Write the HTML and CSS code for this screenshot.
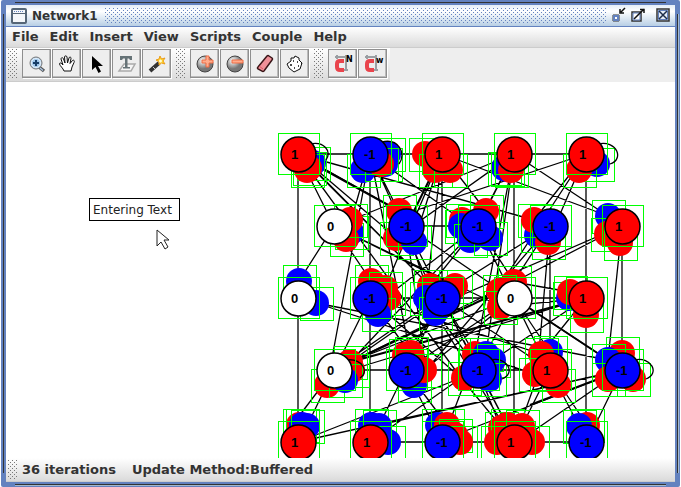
FILE: index.html
```html
<!DOCTYPE html>
<html lang="en">
<head>
<meta charset="utf-8">
<title>Network1</title>
<link rel="stylesheet" href="styles.css">
</head>
<body>
<div class="frame">
  <div class="inner">
    <header class="titlebar">
      <svg class="winicon" width="16" height="16" viewBox="0 0 16 16"><rect x="1" y="1" width="14" height="14" rx="1" fill="#f4f7fa" stroke="#556677" stroke-width="2"/><path d="M2 5.500H14" stroke="#556677"/><path d="M3 3.500H13" stroke="#6382bf" stroke-dasharray="1 1"/></svg>
      <h1>Network1</h1>
      <div class="bumps blue"></div>
      <div class="controls">
        <button type="button" aria-label="Minimize"><svg width="16" height="16" viewBox="0 0 16 16"><path d="M2 8h6v6H2z" fill="#fff" stroke="#333"/><path d="M3 9h4v4H3z" fill="#fff" stroke="#6382bf" stroke-width="2"/><path d="M14 1L10 5M9 2V6H13" fill="none" stroke="#111" stroke-width="1.500"/></svg></button>
        <button type="button" aria-label="Maximize"><svg width="16" height="16" viewBox="0 0 16 16"><path d="M1 5h9v9H1z" fill="#fff" stroke="#333" stroke-width="1.500"/><path d="M2 6h7v7H2z" fill="none" stroke="#6382bf"/><path d="M3 12L13 2M9 2.500H13V6" fill="none" stroke="#111" stroke-width="1.500"/></svg></button>
        <button type="button" class="close" aria-label="Close"><svg width="16" height="16" viewBox="0 0 16 16"><path d="M2 2h12v12H2z" fill="#e6eef8" stroke="#333" stroke-width="1.500"/><path d="M3.500 3.500h9v9h-9z" fill="none" stroke="#6382bf"/><path d="M4 4L12 12M12 4L4 12" stroke="#1c2c48" stroke-width="1.500"/></svg></button>
      </div>
    </header>
    <nav class="menubar">
      <button type="button">File</button><button type="button">Edit</button><button type="button">Insert</button><button type="button">View</button><button type="button">Scripts</button><button type="button">Couple</button><button type="button">Help</button>
    </nav>
    <div class="tools">
      <div class="toolbar">
        <div class="bumps grip"></div>
        <button type="button" aria-label="Zoom"><svg width="20" height="20" viewBox="0 0 20 20"><path d="M12 13L17 17" stroke="#555" stroke-width="3.500"/><path d="M13 14L16 16.500" stroke="#a9c4e2" stroke-width="1.500"/><circle cx="9" cy="9" r="6" fill="#b7d4ef" stroke="#777"/><circle cx="9" cy="9" r="4.500" fill="#9dc5ea" stroke="#e6f1fa"/><path d="M6 9H12M9 6V12" stroke="#173e68" stroke-width="2"/></svg></button>
        <button type="button" aria-label="Pan"><svg width="20" height="20" viewBox="0 0 20 20"><path d="M7 17C6 14 3 12 2.500 10C2.500 8.500 4 8.500 6 11L4 5C4 3.500 6 3 6.500 5L8 9L7.500 3C7.500 1.500 9.800 1.500 10 3L10.500 9L12 4C12.300 2.500 14.300 2.800 14 4.500L13 9.500L15.500 6.500C17 5.500 17.800 7 17 8.500L15 13L14 17Z" fill="#fff" stroke="#111"/></svg></button>
        <button type="button" aria-label="Select"><svg width="20" height="20" viewBox="0 0 20 20"><path d="M5 2V16L8.500 13L11.500 19L14 17.500L11 12H16Z" fill="#000"/></svg></button>
        <button type="button" aria-label="Text"><svg width="20" height="20" viewBox="0 0 20 20"><path d="M7 10H18L14 17H2Z" fill="#f5f5f5" stroke="#aaa" stroke-width="1.500"/><path d="M3 2H15V6H13L12 4.500H10.500V13H13V14.500H6V13H8V4.500H6L5 6H3Z" fill="#667377"/></svg></button>
        <button type="button" aria-label="Wand"><svg width="20" height="20" viewBox="0 0 20 20"><path d="M3 17L12 9" stroke="#333" stroke-width="4"/><path d="M6 13L8 15" stroke="#ccc"/><path d="M13 2L14.500 5L18 4L16 7L18 10L14.500 9L12 11L12 7.500L9 6L12 5Z" fill="#ffd630" stroke="#eb9d1b"/><circle cx="13.500" cy="7" r="1.500" fill="#fffbd0"/></svg></button>
      </div>
      <div class="toolbar">
        <div class="bumps grip"></div>
        <button type="button" aria-label="Add neuron"><svg width="20" height="20" viewBox="0 0 20 20"><circle cx="10" cy="10" r="8" fill="url(#ball)" stroke="#444"/><path d="M11 2h3v4h4v3h-4v4h-3V9H7V6h4z" fill="#ffac8c" stroke="#ef6c45"/></svg></button>
        <button type="button" aria-label="Remove neuron"><svg width="20" height="20" viewBox="0 0 20 20"><circle cx="10" cy="10" r="8" fill="url(#ball)" stroke="#444"/><path d="M7 6h11v3H7z" fill="#ffac8c" stroke="#ef6c45"/></svg></button>
        <button type="button" aria-label="Erase"><svg width="20" height="20" viewBox="0 0 20 20"><path d="M12 2Q13 1 14 2L17 4Q18 5 17 6L9 17Q8 18 7 17L3 15Q2 14 3 13Z" fill="#ef9098" stroke="#3a1618" stroke-width="1.500"/><path d="M4 12L8 15" stroke="#d95763"/></svg></button>
        <button type="button" aria-label="Randomize"><svg width="20" height="20" viewBox="0 0 20 20"><path d="M6 4L9 4L10 2L14 4V6L17 9L15 15L9 18L4 14L2 10L6 7Z" fill="#fff" stroke="#111" stroke-linejoin="round"/><path d="M8 7h1M12 8h1M5 11h2M9 14h1M13 12h1M16 9h1" stroke="#111" stroke-width="1.500"/></svg></button>
      </div>
      <div class="toolbar">
        <div class="bumps grip"></div>
        <button type="button" aria-label="Clamp neurons"><svg width="24" height="20" viewBox="0 0 24 20"><path d="M6 1V5M15 1V16M4 3H17M12 16H17" stroke="#9a9fa3" stroke-width="2"/><path d="M13 7H9Q6 7 6 10V13Q6 16 9 16H13" fill="none" stroke="#e9444c" stroke-width="4"/><text x="15" y="8" class="mini">N</text></svg></button>
        <button type="button" aria-label="Clamp weights"><svg width="24" height="20" viewBox="0 0 24 20"><path d="M6 1V5M15 1V16M4 3H15M12 16H17" stroke="#9a9fa3" stroke-width="2"/><path d="M13 7H9Q6 7 6 10V13Q6 16 9 16H13" fill="none" stroke="#e9444c" stroke-width="4"/><text x="15" y="9" class="mini">w</text></svg></button>
      </div>
    </div>
    <main class="canvas">
      <svg class="network" width="100%" height="100%">
        <defs>
          <radialGradient id="ball" cx="0.35" cy="0.3"><stop offset="0" stop-color="#fff"/><stop offset="1" stop-color="#777"/></radialGradient>
          <g id="sr"><circle r="13" fill="#f00"/><rect x="-16" y="-16" width="33" height="33" class="box"/></g>
          <g id="sb"><circle r="13" fill="#00f"/><rect x="-16" y="-16" width="33" height="33" class="box"/></g>
          <g id="hot"><circle cx="0.500" cy="0.500" r="17.500" class="ring" fill="#f00"/><rect x="-20" y="-21" width="41" height="41" class="box"/><text x="-7" y="5">1</text></g>
          <g id="cold"><circle cx="0.500" cy="0.500" r="17.500" class="ring" fill="#00f"/><rect x="-20" y="-21" width="41" height="41" class="box"/><text x="-6" y="5">-1</text></g>
          <g id="off"><circle cx="0.500" cy="0.500" r="17.500" class="ring" fill="#fff"/><rect x="-20" y="-21" width="41" height="41" class="box"/><text x="-7" y="5">0</text></g>
        </defs>
        <g transform="translate(-6 -82)">
          <path class="edge" d="M298 154H586M298 154V442M370 154V442M442 154V442M514 154V442M586 154V442M550 226V370M622 226V370M406 226H478M370 298H586M334 370H550M370 442H586
          M298 154L334 226M298 154L399 240M298 154L442 298M298 154L399 211M298 154L534 220M298 154L461 378M303 158L430 286
          M370 154L346 239M370 154L327 385M370 154L406 226M370 154L462 220M370 154L430 286M370 154L410 353
          M442 154L385 288M442 154L414 242M442 154L426 298M442 154L486 211
          M514 154L470 240M514 154L478 226M514 154L351 220M514 154L486 354M514 154L475 355M514 154L396 238
          M442 154L608 216M586 154L414 211M586 154L534 220M586 154L548 242M586 154L497 290
          M514 154L608 216M334 226L299 281M334 226L371 281M334 226L502 307M334 226L455 286
          M406 226L435 313M406 226L500 290M406 226L426 370M406 226L478 370
          M478 226L385 298M478 226L430 286M478 226L514 282M478 226L350 362M478 226L541 354
          M550 226L497 307M550 226L537 375M550 226L426 370M550 226L455 286
          M622 226L514 282M622 226L608 360M622 226L455 298
          M316 303L608 360M316 303L538 375M316 303L493 360
          M370 298L327 385M370 298L410 353M370 298L461 378M370 298L541 354
          M442 298L350 362M442 298L410 353M442 298L489 379M442 298L507 425M442 298L550 370
          M514 298L350 362M514 298L424 370M514 298L486 354M514 298L550 352M514 298L608 360
          M586 298L500 307M586 298L541 354M586 298L350 370M586 298L478 370M514 282L570 292
          M334 370L293 424M334 370L307 426M334 370L455 286M334 370L497 290
          M406 370L379 426M406 370L447 425M406 370L500 307M406 370L442 442M406 370L442 298
          M478 370L500 426M478 370L507 425M478 370L426 298
          M550 370L587 425M550 370L579 426M550 370L522 426
          M622 370L587 442M622 370L532 432M622 370L455 435M622 370L298 442M622 370L379 425
          M298 442L461 378M370 442L461 378M442 442L475 355M514 442L435 313M514 442L461 378M514 442L426 298M514 442L538 375"/>
          <path class="edge bold" d="M303 158L399 211M334 370L486 298M586 298L350 362M442 154L414 211M514 298L608 360M622 370L530 405"/>
          <g>
            <use href="#sb" x="313" y="163"/><use href="#sr" x="309" y="168"/><use href="#sr" x="307" y="170"/>
            <use href="#sb" x="388" y="154"/><use href="#sb" x="385" y="164"/><use href="#sb" x="363" y="170"/><use href="#sr" x="381" y="164"/>
            <use href="#sr" x="425" y="154"/><use href="#sr" x="435" y="170"/><use href="#sr" x="450" y="170"/>
            <use href="#sb" x="504" y="168"/><use href="#sb" x="507" y="169"/><use href="#sr" x="511" y="170"/>
            <use href="#sb" x="597" y="164"/><use href="#sr" x="579" y="170"/>
            <use href="#sb" x="351" y="232"/><use href="#sr" x="346" y="239"/><use href="#sr" x="350" y="220"/>
            <use href="#sr" x="399" y="211"/><use href="#sr" x="396" y="238"/><use href="#sb" x="414" y="242"/>
            <use href="#sr" x="462" y="220"/><use href="#sr" x="486" y="211"/><use href="#sb" x="461" y="226"/><use href="#sb" x="470" y="240"/><use href="#sb" x="490" y="238"/>
            <use href="#sb" x="537" y="235"/><use href="#sr" x="534" y="220"/><use href="#sr" x="548" y="242"/>
            <use href="#sb" x="608" y="216"/><use href="#sr" x="607" y="234"/><use href="#sr" x="620" y="243"/>
            <use href="#sb" x="299" y="281"/><use href="#sb" x="316" y="303"/>
            <use href="#sr" x="371" y="281"/><use href="#sr" x="385" y="288"/><use href="#sr" x="388" y="298"/><use href="#sb" x="378" y="314"/>
            <use href="#sr" x="430" y="286"/><use href="#sr" x="455" y="286"/><use href="#sb" x="426" y="298"/><use href="#sb" x="435" y="313"/>
            <use href="#sr" x="514" y="282"/><use href="#sr" x="499" y="291"/><use href="#sr" x="500" y="307"/>
            <use href="#sb" x="569" y="298"/><use href="#sr" x="570" y="292"/><use href="#sr" x="586" y="315"/>
            <use href="#sr" x="350" y="362"/><use href="#sr" x="352" y="370"/><use href="#sr" x="327" y="385"/><use href="#sb" x="345" y="380"/>
            <use href="#sr" x="405" y="355"/><use href="#sr" x="411" y="353"/><use href="#sb" x="414" y="385"/><use href="#sr" x="424" y="370"/>
            <use href="#sr" x="475" y="354"/><use href="#sb" x="486" y="354"/><use href="#sb" x="493" y="360"/><use href="#sr" x="464" y="378"/><use href="#sb" x="489" y="379"/>
            <use href="#sb" x="550" y="352"/><use href="#sr" x="541" y="354"/><use href="#sr" x="535" y="374"/><use href="#sr" x="558" y="385"/>
            <use href="#sr" x="622" y="353"/><use href="#sb" x="608" y="360"/><use href="#sr" x="608" y="379"/><use href="#sr" x="633" y="379"/>
            <use href="#sr" x="299" y="425"/><use href="#sb" x="302" y="425"/><use href="#sb" x="307" y="426"/>
            <use href="#sb" x="371" y="425"/><use href="#sb" x="379" y="426"/><use href="#sb" x="388" y="442"/>
            <use href="#sb" x="438" y="425"/><use href="#sr" x="447" y="425"/><use href="#sr" x="455" y="435"/><use href="#sr" x="460" y="442"/>
            <use href="#sr" x="501" y="428"/><use href="#sr" x="507" y="425"/><use href="#sr" x="522" y="426"/><use href="#sr" x="497" y="442"/><use href="#sr" x="532" y="442"/>
            <use href="#sr" x="587" y="425"/><use href="#sb" x="579" y="426"/>
          </g>
          <path class="edge" d="M310 144C324 141 332 151 326 160M382 142C398 138 407 153 399 164M598 144C618 140 624 160 610 164M346 360C362 358 370 372 360 378M490 360C508 356 516 374 502 379M634 360C652 356 660 374 646 379"/>
          <g>
            <use href="#hot" x="298" y="154"/><use href="#cold" x="370" y="154"/><use href="#hot" x="442" y="154"/><use href="#hot" x="514" y="154"/><use href="#hot" x="586" y="154"/>
            <use href="#off" x="334" y="226"/><use href="#cold" x="406" y="226"/><use href="#cold" x="478" y="226"/><use href="#cold" x="550" y="226"/><use href="#hot" x="622" y="226"/>
            <use href="#off" x="298" y="298"/><use href="#cold" x="370" y="298"/><use href="#cold" x="442" y="298"/><use href="#off" x="514" y="298"/><use href="#hot" x="586" y="298"/>
            <use href="#off" x="334" y="370"/><use href="#cold" x="406" y="370"/><use href="#cold" x="478" y="370"/><use href="#hot" x="550" y="370"/><use href="#cold" x="622" y="370"/>
            <use href="#hot" x="298" y="442"/><use href="#hot" x="370" y="442"/><use href="#cold" x="442" y="442"/><use href="#hot" x="514" y="442"/><use href="#cold" x="586" y="442"/>
          </g>
          <rect class="note-box" x="89" y="198" width="90" height="22"/>
          <text class="note" x="93" y="214">Entering Text</text>
          <path d="M157 230V246L161 242L165 249L168 247L164 240H169Z" fill="#fff" stroke="#222"/>
        </g>
      </svg>
    </main>
    <footer class="status">
      <div class="bumps grip"></div>
      <span>36 iterations</span><span class="method">Update Method:Buffered</span>
    </footer>
  </div>
</div>
</body>
</html>
```
FILE: styles.css
```css
* { box-sizing: border-box; }
body {
  margin: 0;
  background: #fff;
  color: #333;
  font: bold 12px/16px "DejaVu Sans", sans-serif;
}
.frame {
  position: relative;
  height: 100vh;
  margin: 0 1px;
  padding: 5px;
  border-radius: 2px;
  background: #6382bf;
}
.frame::before, .frame::after {
  content: "";
  position: absolute;
  pointer-events: none;
}
.frame::before {
  inset: 2px 14px;
  border: solid #333;
  border-width: 1px 0;
  box-shadow: 0 1px #a3b8cc;
}
.frame::after {
  inset: 14px 2px;
  border: solid #333;
  border-width: 0 1px;
  box-shadow: 1px 0 #a3b8cc;
}
.inner {
  position: relative;
  z-index: 1;
  display: flex;
  flex-direction: column;
  height: 100%;
  background: #eee;
}
button {
  margin: 0;
  padding: 0;
  border: 0;
  background: none;
  color: inherit;
  font: inherit;
}
svg { display: block; }
.titlebar {
  display: flex;
  align-items: center;
  height: 22px;
  padding: 0 4px 0 5px;
  border-bottom: 1px solid #6382bf;
  background: linear-gradient(#e4edf7, #fff 30%, #b8cfe5);
}
h1 {
  margin: 0 7px 0 5px;
  font: inherit;
}
.bumps {
  background-image:
    conic-gradient(at 1px 1px, transparent 270deg, #777 0),
    conic-gradient(at 1px 1px, transparent 270deg, #777 0);
  background-size: 4px 4px;
  background-position: 0 0, 2px 2px;
}
.blue {
  flex: 1;
  height: 15px;
  background-image:
    conic-gradient(at 1px 1px, transparent 270deg, #6382bf 0),
    conic-gradient(at 1px 1px, transparent 270deg, #6382bf 0);
}
.controls {
  display: flex;
  gap: 4px;
  padding-left: 5px;
}
.controls svg { margin-bottom: 1px; }
.close { margin-left: 4px; }
.menubar {
  display: flex;
  gap: 11px;
  height: 21px;
  padding: 0 6px;
  border-bottom: 1px solid #ccc;
  background: linear-gradient(#fff, #dadada);
  font-size: 13px;
}
.tools {
  display: flex;
  height: 34px;
}
.toolbar {
  display: flex;
  align-items: center;
  padding: 0 2px 2px;
  border-bottom: 1px solid #ccc;
  background: linear-gradient(#fff, #dadada);
}
.grip {
  width: 10px;
  height: 30px;
  margin-right: 4px;
}
.toolbar button {
  display: flex;
  align-items: center;
  justify-content: center;
  width: 29px;
  height: 29px;
  margin-right: 1px;
  border: 1px solid #8f8f8f;
  background: #eee;
  box-shadow: inset -1px -1px #bbb, 1px 1px #fff;
}
.canvas {
  flex: 1;
  min-height: 0;
  background: #fff;
}
.network { overflow: hidden; }
.edge {
  fill: none;
  stroke: #000;
  stroke-width: 1.3px;
}
.bold { stroke-width: 2px; }
.box {
  fill: none;
  stroke: #0f0;
  stroke-width: 1px;
  shape-rendering: crispEdges;
}
.ring {
  stroke: #000;
  stroke-width: 1.5px;
}
#hot text, #cold text, #off text {
  font: bold 13px "Liberation Sans", sans-serif;
  fill: #000;
}
.note-box {
  fill: #fff;
  stroke: #000;
  shape-rendering: crispEdges;
}
.note {
  font-weight: normal;
  fill: #222;
}
.mini {
  font: bold 8px "DejaVu Sans", sans-serif;
  fill: #000;
}
.status {
  display: flex;
  align-items: center;
  height: 24px;
  padding-left: 2px;
  border-bottom: 1px solid #ccc;
  background: linear-gradient(#fff, #dadada);
  font-size: 13px;
}
.status .grip { height: 20px; }
.method { margin-left: 16px; }
```
